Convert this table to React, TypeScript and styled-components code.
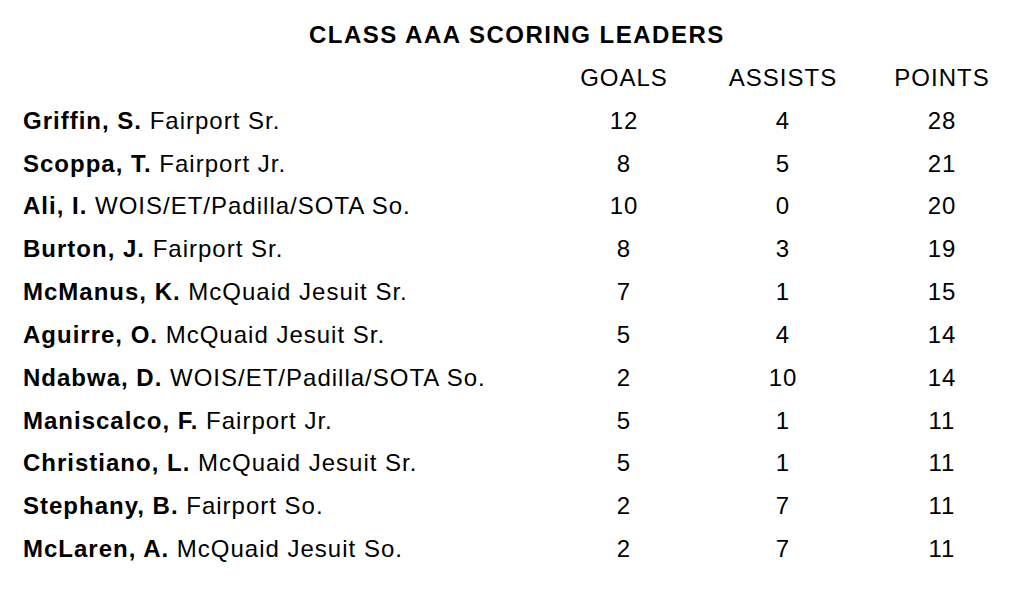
import React from "react";
import styled, { createGlobalStyle } from "styled-components";

const GlobalStyle = createGlobalStyle`
  body {
    margin: 0;
    background: #ffffff;
    font-family: "Liberation Sans", Arial, Helvetica, sans-serif;
    color: #000000;
  }
`;

type Leader = {
  name: string;
  school: string;
  goals: number;
  assists: number;
  points: number;
};

const leaders: Leader[] = [
  { name: "Griffin, S.", school: "Fairport Sr.", goals: 12, assists: 4, points: 28 },
  { name: "Scoppa, T.", school: "Fairport Jr.", goals: 8, assists: 5, points: 21 },
  { name: "Ali, I.", school: "WOIS/ET/Padilla/SOTA So.", goals: 10, assists: 0, points: 20 },
  { name: "Burton, J.", school: "Fairport Sr.", goals: 8, assists: 3, points: 19 },
  { name: "McManus, K.", school: "McQuaid Jesuit Sr.", goals: 7, assists: 1, points: 15 },
  { name: "Aguirre, O.", school: "McQuaid Jesuit Sr.", goals: 5, assists: 4, points: 14 },
  { name: "Ndabwa, D.", school: "WOIS/ET/Padilla/SOTA So.", goals: 2, assists: 10, points: 14 },
  { name: "Maniscalco, F.", school: "Fairport Jr.", goals: 5, assists: 1, points: 11 },
  { name: "Christiano, L.", school: "McQuaid Jesuit Sr.", goals: 5, assists: 1, points: 11 },
  { name: "Stephany, B.", school: "Fairport So.", goals: 2, assists: 7, points: 11 },
  { name: "McLaren, A.", school: "McQuaid Jesuit So.", goals: 2, assists: 7, points: 11 },
];

const Page = styled.div`
  padding: 14px 0 0 23px;
  font-size: 24px;
  letter-spacing: 1px;
  line-height: 42.85px;
`;

const Title = styled.h1`
  margin: 0;
  padding-left: 286px;
  font-size: 24px;
  font-weight: 700;
  letter-spacing: 1.5px;
  line-height: 42.85px;
  white-space: nowrap;
`;

const Table = styled.div`
  display: grid;
  grid-template-columns: 521px 160px 158px 160px;
`;

const Cell = styled.div<{ $center?: boolean }>`
  text-align: ${(p) => (p.$center ? "center" : "left")};
  white-space: nowrap;
`;

const Name = styled.b`
  font-weight: 700;
`;

const App = () => (
  <>
    <GlobalStyle />
    <Page>
      <Title>CLASS AAA SCORING LEADERS</Title>
      <Table>
        <Cell />
        <Cell $center>GOALS</Cell>
        <Cell $center>ASSISTS</Cell>
        <Cell $center>POINTS</Cell>
        {leaders.map((l) => (
          <React.Fragment key={l.name}>
            <Cell>
              <Name>{l.name}</Name> {l.school}
            </Cell>
            <Cell $center>{l.goals}</Cell>
            <Cell $center>{l.assists}</Cell>
            <Cell $center>{l.points}</Cell>
          </React.Fragment>
        ))}
      </Table>
    </Page>
  </>
);

export default App;
